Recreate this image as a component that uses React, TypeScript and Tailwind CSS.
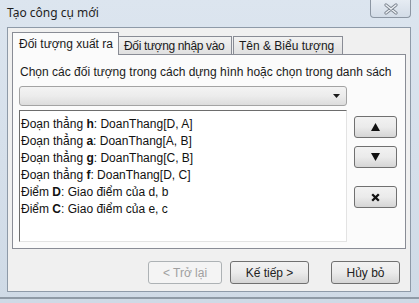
import React from "react";

const ITEMS: { kind: string; name: string; def: string }[] = [
  { kind: "Đoạn thẳng", name: "h", def: "DoanThang[D, A]" },
  { kind: "Đoạn thẳng", name: "a", def: "DoanThang[A, B]" },
  { kind: "Đoạn thẳng", name: "g", def: "DoanThang[C, B]" },
  { kind: "Đoạn thẳng", name: "f", def: "DoanThang[D, C]" },
  { kind: "Điểm", name: "D", def: "Giao điểm của d, b" },
  { kind: "Điểm", name: "C", def: "Giao điểm của e, c" },
];

const font = "font-['Liberation_Sans',Arial,sans-serif]";

const SideButton = ({ children, className }: { children: React.ReactNode; className?: string }) => (
  <div
    className={`flex h-[22px] w-[43px] items-center justify-center rounded-[3px] border border-[#707070] bg-gradient-to-b from-[#f2f2f2] via-[#ebebeb] to-[#d5d5d5] ${className ?? ""}`}
  >
    {children}
  </div>
);

const Button = ({ label, width, disabled }: { label: string; width: string; disabled?: boolean }) => (
  <div
    className={`flex h-[23px] items-center justify-center rounded-[3px] border text-[12px] ${width} ${
      disabled
        ? "border-[#adb2b5] bg-[#f4f4f4] text-[#a0a0a0]"
        : "border-[#707070] bg-gradient-to-b from-[#f2f2f2] via-[#ebebeb] to-[#d5d5d5] text-[#222]"
    }`}
  >
    {label}
  </div>
);

export default function App() {
  return (
    <div className={`h-[303px] w-[419px] overflow-hidden bg-gradient-to-b from-[#dce5ef] to-[#cfdae6] ${font}`}>
      {/* title bar */}
      <div className="flex h-[27px] items-start">
        <div className="pl-[7px] pt-[5px] font-['Noto_Sans',sans-serif] text-[12px] leading-[16px] text-[#1e1e1e]">
          Tạo công cụ mới
        </div>
        <div className="ml-auto mr-[8px] flex h-[18px] w-[41px] items-center justify-center rounded-b-[4px] border border-t-0 border-[#8c96a3] bg-gradient-to-b from-[#e6ecf3] to-[#d3dce7]">
          <svg width="14" height="12" viewBox="0 0 14 12">
            <path
              d="M2 2 L12 10 M12 2 L2 10"
              stroke="#7d8590"
              strokeWidth="3.2"
              strokeLinecap="round"
            />
            <path
              d="M2 2 L12 10 M12 2 L2 10"
              stroke="#eef2f6"
              strokeWidth="1.4"
              strokeLinecap="round"
            />
          </svg>
        </div>
      </div>

      {/* client area */}
      <div className="ml-[7px] flex h-[265px] w-[404px] flex-col border border-[#8e9aa8] bg-[#f0f0f0]">
        {/* tabs */}
        <div className="ml-[4px] mt-[4px] flex h-[22px] items-end text-[12px] text-[#1a1a1a]">
          <div className="relative z-10 -mb-px flex h-[23px] w-[107px] items-center border border-b-0 border-[#898c95] bg-[#fbfbfb] pl-[6px] pb-[1px]">
            Đối tượng xuất ra
          </div>
          <div className="flex h-[18px] w-[113px] items-center border border-l-0 border-b-0 border-[#898c95] bg-gradient-to-b from-[#f2f2f2] to-[#e0e0e0] pl-[5px] tracking-[-0.35px]">
            Đối tượng nhập vào
          </div>
          <div className="ml-[1px] flex h-[18px] w-[110px] items-center border border-b-0 border-[#898c95] bg-gradient-to-b from-[#f2f2f2] to-[#e0e0e0] pl-[5px]">
            Tên &amp; Biểu tượng
          </div>
        </div>

        {/* tab panel */}
        <div className="ml-[4px] flex h-[195px] w-[394px] flex-col border border-[#898c95] bg-[#fbfbfb] pl-[6px]">
          <div className="mt-[10px] h-[15px] pl-[1px] text-[12px] leading-[15px] text-[#1a1a1a]">
            Chọn các đối tượng trong cách dựng hình hoặc chọn trong danh sách
          </div>
          <div className="mt-[6px] flex h-[20px] w-[328px] items-center justify-end rounded-[3px] border border-[#a3a3a3] bg-gradient-to-b from-[#f3f3f3] via-[#ececec] to-[#dcdcdc] pr-[6px]">
            <svg width="7" height="4" viewBox="0 0 7 4">
              <path d="M0 0 H7 L3.5 4 Z" fill="#1a1a1a" />
            </svg>
          </div>
          <div className="mt-[4px] flex gap-[7px]">
            <div className="h-[132px] w-[328px] border border-b-[#e3e3e3] border-l-[#6d6d6d] border-r-[#e3e3e3] border-t-[#6d6d6d] bg-white pl-[1px] pt-[5px] text-[12px] leading-[17px] text-[#111]">
              {ITEMS.map((it) => (
                <div key={it.name + it.def}>
                  {it.kind} <b>{it.name}</b>: {it.def}
                </div>
              ))}
            </div>
            <div className="flex flex-col pt-[6px]">
              <SideButton>
                <svg width="9" height="8" viewBox="0 0 9 8">
                  <path d="M4.5 0 L9 8 H0 Z" fill="#111" />
                </svg>
              </SideButton>
              <SideButton className="mt-[8px]">
                <svg width="9" height="8" viewBox="0 0 9 8">
                  <path d="M0 0 H9 L4.5 8 Z" fill="#111" />
                </svg>
              </SideButton>
              <SideButton className="mt-[18px]">
                <svg width="9" height="9" viewBox="0 0 9 9">
                  <path d="M1.2 1.2 L7.8 7.8 M7.8 1.2 L1.2 7.8" stroke="#111" strokeWidth="2.3" />
                </svg>
              </SideButton>
            </div>
          </div>
        </div>

        {/* footer buttons */}
        <div className="mt-[12px] flex pl-[140px]">
          <Button label="< Trở lại" width="w-[74px]" disabled />
          <Button label="Kế tiếp >" width="ml-[8px] w-[79px]" />
          <Button label="Hủy bỏ" width="ml-[22px] w-[69px]" />
        </div>
      </div>
      <div className="mt-[5px] h-[2px] w-full bg-[#8f9aa6]" />
    </div>
  );
}
